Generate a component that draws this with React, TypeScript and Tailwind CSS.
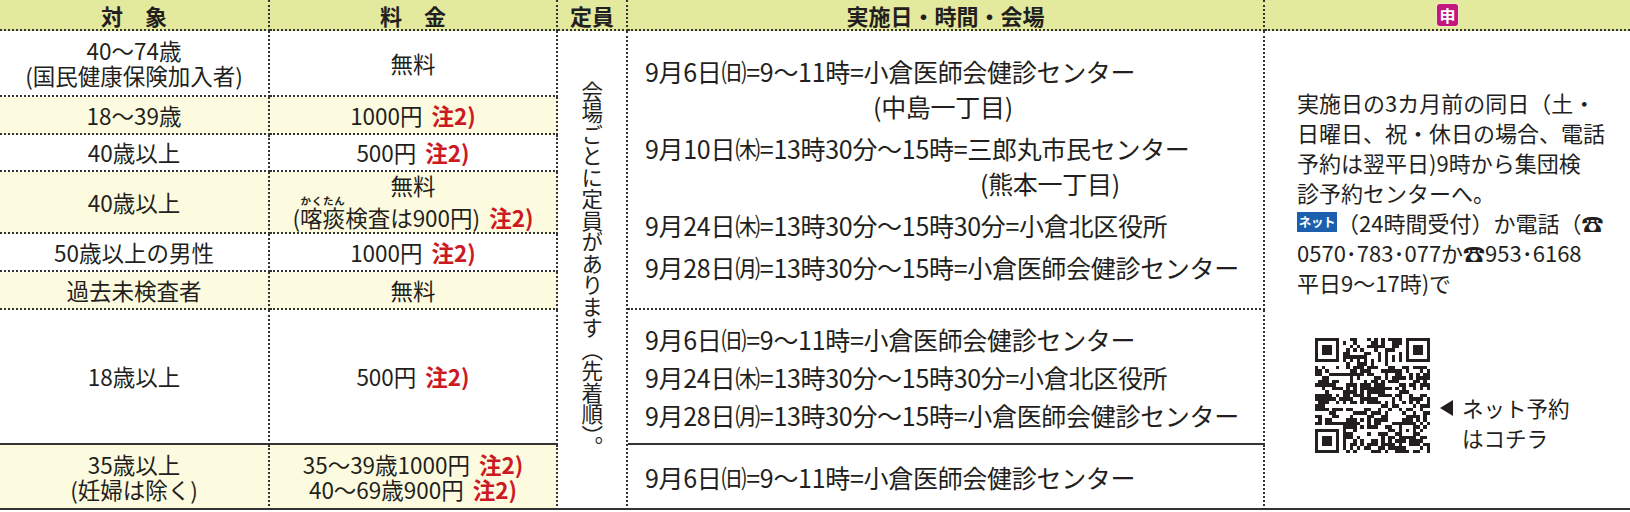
const ink = "text-[#231f20]";
const line = "border-[#333]";

// pseudo QR pattern, 33x33 modules (version 4 look)
const QN = 33;
function buildQrPath(): string {
  const dark: boolean[][] = Array.from({ length: QN }, () => Array(QN).fill(false));
  const fixed: boolean[][] = Array.from({ length: QN }, () => Array(QN).fill(false));
  let seed = 20150906;
  const rand = () => {
    seed = (seed * 1103515245 + 12345) & 0x7fffffff;
    return seed / 0x7fffffff;
  };
  const finder = (ox: number, oy: number) => {
    for (let y = -1; y <= 7; y++)
      for (let x = -1; x <= 7; x++) {
        const px = ox + x;
        const py = oy + y;
        if (px < 0 || py < 0 || px >= QN || py >= QN) continue;
        fixed[py][px] = true;
        const ring = x === 0 || x === 6 || y === 0 || y === 6;
        const core = x >= 2 && x <= 4 && y >= 2 && y <= 4;
        dark[py][px] = x >= 0 && x <= 6 && y >= 0 && y <= 6 && (ring || core);
      }
  };
  finder(0, 0);
  finder(QN - 7, 0);
  finder(0, QN - 7);
  for (let i = 8; i < QN - 8; i++) {
    fixed[6][i] = true;
    fixed[i][6] = true;
    dark[6][i] = i % 2 === 0;
    dark[i][6] = i % 2 === 0;
  }
  for (let y = -2; y <= 2; y++)
    for (let x = -2; x <= 2; x++) {
      fixed[26 + y][26 + x] = true;
      dark[26 + y][26 + x] = Math.max(Math.abs(x), Math.abs(y)) !== 1;
    }
  let d = "";
  for (let y = 0; y < QN; y++)
    for (let x = 0; x < QN; x++) {
      if (!fixed[y][x]) dark[y][x] = rand() < 0.5;
      if (dark[y][x]) d += `M${x} ${y}h1v1h-1z`;
    }
  return d;
}
const qrPath = buildQrPath();

function Note() {
  return <span className="ml-[9px] font-bold text-[#cc1a24]">注2)</span>;
}

function Head({ children, last }: { children: React.ReactNode; last?: boolean }) {
  return (
    <div
      className={
        "flex items-center justify-center border-b-2 border-dotted bg-[#e3e99d] text-[22px] font-bold leading-none " +
        line +
        (last ? "" : " border-r-2")
      }
    >
      {children}
    </div>
  );
}

interface RowDef {
  target: React.ReactNode;
  fee: React.ReactNode;
  cream: boolean;
  solid?: boolean;
}

const rows: RowDef[] = [
  {
    target: (
      <>
        <div>40〜74歳</div>
        <div>(国民健康保険加入者)</div>
      </>
    ),
    fee: <div>無料</div>,
    cream: false,
  },
  { target: <div>18〜39歳</div>, fee: <div>1000円<Note /></div>, cream: true },
  { target: <div>40歳以上</div>, fee: <div>500円<Note /></div>, cream: false },
  {
    target: <div>40歳以上</div>,
    fee: (
      <>
        <div className="leading-[20px]">無料</div>
        <div className="leading-[24px]">
          (<ruby>
            喀痰<rt className="text-[10.5px] font-bold leading-none">かくたん</rt>
          </ruby>
          検査は900円)<Note />
        </div>
      </>
    ),
    cream: true,
  },
  { target: <div>50歳以上の男性</div>, fee: <div>1000円<Note /></div>, cream: false },
  { target: <div>過去未検査者</div>, fee: <div>無料</div>, cream: true },
  { target: <div>18歳以上</div>, fee: <div>500円<Note /></div>, cream: false, solid: true },
  {
    target: (
      <>
        <div>35歳以上</div>
        <div>(妊婦は除く)</div>
      </>
    ),
    fee: (
      <>
        <div>35〜39歳1000円<Note /></div>
        <div>40〜69歳900円<Note /></div>
      </>
    ),
    cream: true,
    solid: true,
  },
];

const rowStart = [
  "row-start-2",
  "row-start-3",
  "row-start-4",
  "row-start-5",
  "row-start-6",
  "row-start-7",
  "row-start-8",
  "row-start-9",
];

function DataCell({
  children,
  col,
  row,
  cream,
  solid,
}: {
  children: React.ReactNode;
  col: string;
  row: number;
  cream: boolean;
  solid?: boolean;
}) {
  return (
    <div
      className={[
        "flex flex-col items-center justify-center whitespace-nowrap border-r-2 border-b-2 border-dotted text-[22.5px] leading-[25px]",
        line,
        col,
        rowStart[row],
        cream ? "bg-[#fdfbdf]" : "bg-white",
        solid ? "[border-bottom-style:solid]" : "",
      ].join(" ")}
    >
      {children}
    </div>
  );
}

function Sched({ children, className = "" }: { children: React.ReactNode; className?: string }) {
  return <div className={"whitespace-nowrap " + className}>{children}</div>;
}

export default function App() {
  return (
    <div
      className={
        "h-[512px] w-[1630px] bg-white font-['Noto_Sans_CJK_JP','Noto_Sans_CJK_SC',sans-serif] " + ink
      }
    >
      <div className="grid grid-cols-[270px_288px_70px_637px_365px] grid-rows-[31px_66px_38px_37px_62px_38px_38px_135px_65px]">
        <Head>対　象</Head>
        <Head>料　金</Head>
        <Head>定員</Head>
        <Head>実施日・時間・会場</Head>
        <Head last>
          <span className="flex h-[22px] w-[21px] items-center justify-center rounded-[3px] bg-[#c2177f] text-[16px] font-bold text-white ring-1 ring-[#f3e9c0]">
            申
          </span>
        </Head>

        {rows.map((r, i) => (
          <DataCell key={"t" + i} col="col-start-1" row={i} cream={r.cream} solid={r.solid}>
            {r.target}
          </DataCell>
        ))}
        {rows.map((r, i) => (
          <DataCell key={"f" + i} col="col-start-2" row={i} cream={r.cream} solid={r.solid}>
            {r.fee}
          </DataCell>
        ))}

        <div
          className={
            "col-start-3 row-start-2 row-span-8 flex items-center justify-center border-r-2 border-b-2 border-dotted [border-bottom-style:solid] " +
            line
          }
        >
          <span className="text-[21.5px] leading-none [writing-mode:vertical-rl]">
            会場ごとに定員があります（先着順）。
          </span>
        </div>

        <div
          className={
            "col-start-4 row-start-2 row-span-6 flex flex-col justify-center gap-[7px] border-r-2 border-b-2 border-dotted pl-[17px] text-[25px] leading-[35px] tracking-[-0.3px] " +
            line
          }
        >
          <div>
            <Sched>9月6日㈰=9〜11時=小倉医師会健診センター</Sched>
            <Sched className="pl-[228px]">(中島一丁目)</Sched>
          </div>
          <div>
            <Sched>9月10日㈭=13時30分〜15時=三郎丸市民センター</Sched>
            <Sched className="pl-[335px]">(熊本一丁目)</Sched>
          </div>
          <Sched>9月24日㈭=13時30分〜15時30分=小倉北区役所</Sched>
          <Sched>9月28日㈪=13時30分〜15時=小倉医師会健診センター</Sched>
        </div>

        <div
          className={
            "col-start-4 row-start-8 flex flex-col justify-center border-r-2 border-b-2 border-dotted [border-bottom-style:solid] pl-[17px] text-[25px] leading-[38px] tracking-[-0.3px] " +
            line
          }
        >
          <Sched>9月6日㈰=9〜11時=小倉医師会健診センター</Sched>
          <Sched>9月24日㈭=13時30分〜15時30分=小倉北区役所</Sched>
          <Sched>9月28日㈪=13時30分〜15時=小倉医師会健診センター</Sched>
        </div>

        <div
          className={
            "col-start-4 row-start-9 flex flex-col justify-center border-r-2 border-b-2 border-dotted [border-bottom-style:solid] pl-[17px] text-[25px] leading-[38px] tracking-[-0.3px] " +
            line
          }
        >
          <Sched>9月6日㈰=9〜11時=小倉医師会健診センター</Sched>
        </div>

        <div
          className={
            "col-start-5 row-start-2 row-span-8 border-b-2 border-solid pl-[32px] pt-[56px] text-[22px] leading-[30px] " +
            line
          }
        >
          <div className="whitespace-nowrap">
            <div>実施日の3カ月前の同日（土・</div>
            <div>日曜日、祝・休日の場合、電話</div>
            <div>予約は翌平日)9時から集団検</div>
            <div>診予約センターへ。</div>
            <div className="flex items-center">
              <span className="inline-flex h-[20px] w-[40px] items-center justify-center bg-[#1b5fae] text-[12.5px] font-bold leading-none tracking-tight text-white">
                ネット
              </span>
              <span>（24時間受付）か電話（☎</span>
            </div>
            <div>0570･783･077か☎953･6168</div>
            <div>平日9〜17時)で</div>
          </div>

          <div className="mt-[41px] flex items-end pl-[18px]">
            <svg
              width="115"
              height="115"
              viewBox="0 0 33 33"
              shapeRendering="crispEdges"
              className="shrink-0"
            >
              <path d={qrPath} fill="#231f20" />
            </svg>
            <div className="ml-[10px] flex items-start">
              <svg width="13" height="16" viewBox="0 0 13 16" className="mr-[9px] mt-[7px] shrink-0">
                <polygon points="13,0 13,16 0,8" fill="#231f20" />
              </svg>
              <div className="whitespace-nowrap text-[21.5px] leading-[30px]">
                <div>ネット予約</div>
                <div>はコチラ</div>
              </div>
            </div>
          </div>
        </div>
      </div>
    </div>
  );
}
